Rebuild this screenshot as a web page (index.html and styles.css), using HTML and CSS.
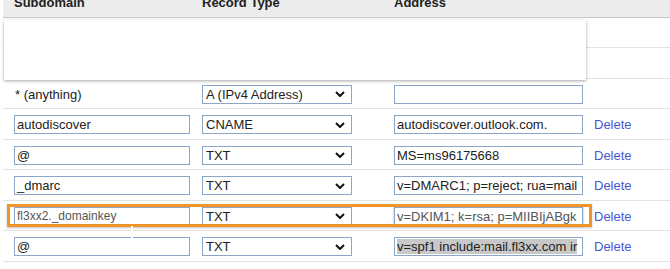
FILE: index.html
```html
<!DOCTYPE html>
<html>
<head>
<meta charset="utf-8">
<link rel="stylesheet" href="styles.css">
</head>
<body>
<div class="page">
  <div class="thead">
    <div class="th">Subdomain</div>
    <div class="th">Record Type</div>
    <div class="th">Address</div>
    <div class="th"></div>
  </div>
  <div class="tbody">
    <div class="row"></div>
    <div class="row"></div>
    <div class="row">
      <div class="plain">* (anything)</div>
      <div class="select"><span>A (IPv4 Address)</span><svg class="chev" viewBox="0 0 10 6" width="10" height="6"><path d="M1 1 L5 5 L9 1" fill="none" stroke="#111" stroke-width="2"/></svg></div>
      <div class="field addr"></div>
      <div></div>
    </div>
    <div class="row">
      <div class="field sub">autodiscover</div>
      <div class="select"><span>CNAME</span><svg class="chev" viewBox="0 0 10 6" width="10" height="6"><path d="M1 1 L5 5 L9 1" fill="none" stroke="#111" stroke-width="2"/></svg></div>
      <div class="field addr">autodiscover.outlook.com.</div>
      <a class="del">Delete</a>
    </div>
    <div class="row">
      <div class="field sub">@</div>
      <div class="select"><span>TXT</span><svg class="chev" viewBox="0 0 10 6" width="10" height="6"><path d="M1 1 L5 5 L9 1" fill="none" stroke="#111" stroke-width="2"/></svg></div>
      <div class="field addr">MS=ms96175668</div>
      <a class="del">Delete</a>
    </div>
    <div class="row">
      <div class="field sub">_dmarc</div>
      <div class="select"><span>TXT</span><svg class="chev" viewBox="0 0 10 6" width="10" height="6"><path d="M1 1 L5 5 L9 1" fill="none" stroke="#111" stroke-width="2"/></svg></div>
      <div class="field addr">v=DMARC1; p=reject; rua=mail</div>
      <a class="del">Delete</a>
    </div>
    <div class="row">
      <div class="field sub dim small">fl3xx2._domainkey</div>
      <div class="select"><span>TXT</span><svg class="chev" viewBox="0 0 10 6" width="10" height="6"><path d="M1 1 L5 5 L9 1" fill="none" stroke="#111" stroke-width="2"/></svg></div>
      <div class="field addr dim shadow">v=DKIM1; k=rsa; p=MIIBIjABgk</div>
      <a class="del">Delete</a>
    </div>
    <div class="row">
      <div class="field sub">@</div>
      <div class="select"><span>TXT</span><svg class="chev" viewBox="0 0 10 6" width="10" height="6"><path d="M1 1 L5 5 L9 1" fill="none" stroke="#111" stroke-width="2"/></svg></div>
      <div class="field addr"><span class="sel">v=spf1 include:mail.fl3xx.com ir</span></div>
      <a class="del">Delete</a>
    </div>
  </div>
  <div class="overlay"></div>
  <div class="highlight"></div>
  <div class="gap"></div>
</div>
</body>
</html>
```

FILE: styles.css
```css
html, body {
  margin: 0;
  padding: 0;
  background: #fff;
}
body {
  font-family: "Liberation Sans", Arial, sans-serif;
  font-size: 13px;
  color: #222;
  overflow: hidden;
}
.page {
  position: relative;
  width: 670px;
  height: 269px;
  padding-left: 3px;
  box-sizing: border-box;
}
.thead {
  display: grid;
  grid-template-columns: 188px 192px 200px 1fr;
  padding-left: 11px;
  height: 16.5px;
  background: #ececec;
  border-bottom: 1.5px solid #c6c6c6;
  overflow: hidden;
}
.th {
  font-weight: bold;
  font-size: 13px;
  line-height: 6px;
  color: #222;
}
.row {
  display: grid;
  grid-template-columns: 188px 192px 200px 1fr;
  align-items: center;
  padding-left: 11px;
  height: 30.5px;
  box-sizing: border-box;
  padding-top: 2px;
  border-bottom: 1.5px solid #e2e2e2;
}
.plain {
  padding-left: 1px;
  line-height: 19px;
}
.field {
  height: 19px;
  box-sizing: border-box;
  border: 1px solid #8ea6c6;
  padding: 0 2px;
  line-height: 17px;
  white-space: nowrap;
  overflow: hidden;
  background: #fff;
}
.field.sub {
  width: 176px;
}
.field.addr {
  width: 189px;
}
.select {
  width: 150px;
  height: 19px;
  box-sizing: border-box;
  border: 1px solid #8ea6c6;
  padding: 0 6px 0 3px;
  line-height: 17px;
  display: flex;
  align-items: center;
  justify-content: space-between;
}
.chev {
  display: block;
}
.dim {
  color: #555;
}
.small {
  font-size: 12px;
}
.shadow {
  box-shadow: 0 0 2px rgba(0, 0, 0, 0.35);
}
.sel {
  background: #c8c8c8;
}
.del {
  color: #4757d3;
  line-height: 19px;
  padding-left: 0;
  cursor: pointer;
}
.overlay {
  position: absolute;
  left: 4px;
  top: 20px;
  width: 582px;
  height: 60px;
  background: #fff;
  box-shadow: 0 1px 3px rgba(0, 0, 0, 0.35);
}
.highlight {
  position: absolute;
  left: 7px;
  top: 204px;
  width: 585px;
  height: 23px;
  box-sizing: border-box;
  border: 3px solid #f0952b;
  box-shadow: 0 1px 2px rgba(0, 0, 0, 0.25);
}
.gap {
  position: absolute;
  left: 131px;
  top: 226px;
  width: 2px;
  height: 13px;
  background: #fff;
}
```
